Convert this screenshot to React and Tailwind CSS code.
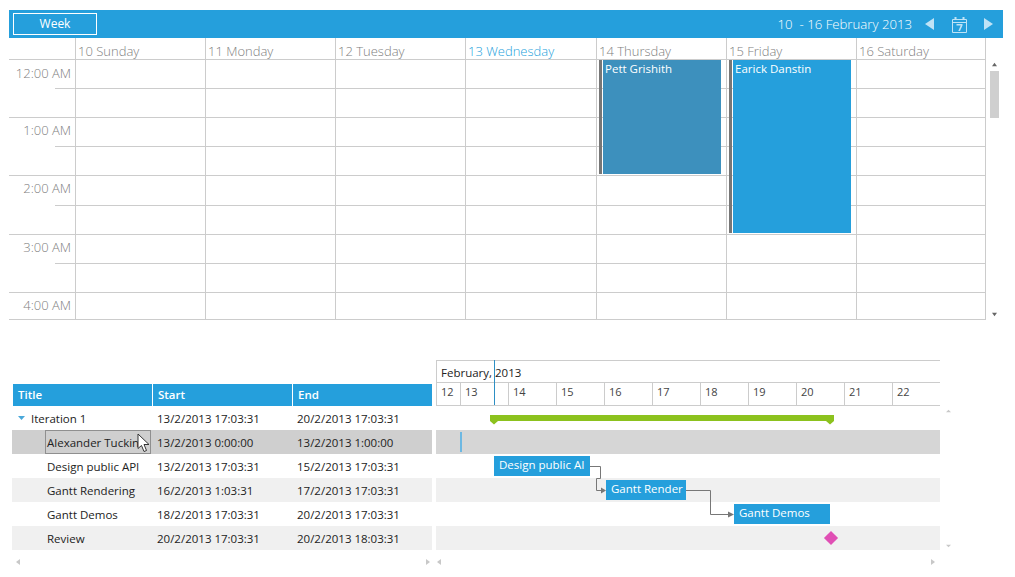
import { Fragment } from 'react';

const days = ['10 Sunday', '11 Monday', '12 Tuesday', '13 Wednesday', '14 Thursday', '15 Friday', '16 Saturday'];

// heights follow the picture, the grid is not perfectly even
const calRows = [
  { h: 28, time: '12:00 AM' },
  { h: 29 },
  { h: 29, time: '1:00 AM' },
  { h: 29 },
  { h: 30, time: '2:00 AM' },
  { h: 29 },
  { h: 29, time: '3:00 AM' },
  { h: 29 },
  { h: 27, time: '4:00 AM' },
];

const tasks = [
  { title: 'Iteration 1', start: '13/2/2013 17:03:31', end: '20/2/2013 17:03:31', group: true },
  { title: 'Alexander Tuckin', start: '13/2/2013 0:00:00', end: '13/2/2013 1:00:00', selected: true },
  { title: 'Design public API', start: '13/2/2013 17:03:31', end: '15/2/2013 17:03:31' },
  { title: 'Gantt Rendering', start: '16/2/2013 1:03:31', end: '17/2/2013 17:03:31', alt: true },
  { title: 'Gantt Demos', start: '18/2/2013 17:03:31', end: '20/2/2013 17:03:31' },
  { title: 'Review', start: '20/2/2013 17:03:31', end: '20/2/2013 18:03:31', alt: true },
];

const ganttDays = [13, 14, 15, 16, 17, 18, 19, 20, 21, 22];

function Arrow({ dir, className }) {
  return (
    <svg width="9" height="12" viewBox="0 0 9 12" className={className}>
      <path d={dir === 'left' ? 'M9 0V12L0 6Z' : 'M0 0V12L9 6Z'} fill="currentColor" />
    </svg>
  );
}

function CalendarIcon() {
  return (
    <svg width="15" height="17" viewBox="0 0 15 17" className="text-[#bfe3f6]">
      <path d="M.5 3.5H14.5V16.5H.5Z M.5 6.5H14.5" fill="none" stroke="currentColor" />
      <path d="M2.5 1H4.5V4H2.5Z M10.5 1H12.5V4H10.5Z M4.5 8H10.5V9.5L8 15H6.3L8.7 9.5H4.5Z" fill="currentColor" />
    </svg>
  );
}

function Tiny({ d, x = 8, y = 6 }) {
  return (
    <svg width={x} height={y} viewBox="0 0 8 6">
      <path d={d} fill="currentColor" />
    </svg>
  );
}

function Calendar() {
  return (
    <div className="ml-[9px] w-[994px] relative">
      <div className="h-[28px] bg-[#259fdc] flex items-center pl-[4px] pr-[10px] text-white">
        <div className="w-[84px] h-[22px] border border-white flex items-center justify-center text-[12px] font-normal">Week</div>
        <span className="ml-auto mt-[2px] text-[13.2px] font-light whitespace-pre">10  - 16 February 2013</span>
        <Arrow dir="left" className="ml-[13px] text-[#bfe3f6]" />
        <span className="ml-[18px]"><CalendarIcon /></span>
        <Arrow dir="right" className="ml-[17px] text-[#bfe3f6]" />
      </div>

      <div className="flex h-[22px] w-[977px]">
        <div className="w-[66px] border-b border-[#cccccc]" />
        {days.map((d, i) => (
          <div
            key={d}
            className={`border-l border-b border-[#cccccc] pl-[2px] text-[13px] font-light leading-[26px] overflow-hidden ${i === 3 ? 'w-[131px] text-[#259fdc]' : 'w-[130px] text-[#808080]'} ${i === 6 ? 'border-r' : ''}`}
          >
            {d}
          </div>
        ))}
      </div>

      <div className="relative w-[977px] border-b border-[#cccccc]">
        {calRows.map((r, idx) => (
          <div key={idx} className="flex" style={{ height: r.h }}>
            <div className="w-[66px] relative">
              {r.time ? (
                <div className={`h-full pr-[4px] text-right text-[13px] font-light leading-[20px] text-[#808080] ${idx === 0 ? 'pt-[3px]' : 'pt-[2px] border-t border-[#cccccc]'}`}>{r.time}</div>
              ) : (
                <div className="h-full ml-[46px] border-t border-[#cccccc]" />
              )}
            </div>
            {days.map((d, i) => (
              <div
                key={d}
                className={`border-l border-[#cccccc] ${idx === 0 ? '' : 'border-t'} ${i === 3 ? 'w-[131px]' : 'w-[130px]'} ${i === 6 ? 'border-r' : ''}`}
              />
            ))}
          </div>
        ))}

        <div className="absolute left-[590px] top-[0px] h-[114px] w-[122px] flex">
          <div className="w-[3px] bg-[#777777]" />
          <div className="ml-[1px] flex-1 bg-[#3d90bd] px-[2px] text-[11.5px] font-medium leading-[18px] text-white">Pett Grishith</div>
        </div>
        <div className="absolute left-[720px] top-[0px] h-[173px] w-[122px] flex">
          <div className="w-[3px] bg-[#777777]" />
          <div className="ml-[1px] flex-1 bg-[#259fdc] px-[2px] text-[11.5px] font-medium leading-[18px] text-white">Earick Danstin</div>
        </div>
      </div>

      <div className="absolute left-[981px] top-[52px] h-[255px] w-[9px] flex flex-col items-center text-[#666666]">
        <Tiny d="M4 1L7 5H1Z" x={7} y={5} />
        <div className="mt-[4px] h-[47px] w-[9px] bg-[#cfcfcf]" />
        <div className="mt-auto"><Tiny d="M1 1H7L4 5Z" x={7} y={5} /></div>
      </div>
    </div>
  );
}

function TaskTable() {
  return (
    <div className="w-[420px] pt-[24px]">
      <div className="ml-[1px] grid grid-cols-[139px_139px_139px] gap-x-[1px] h-[21px] mb-[1px]">
        {['Title', 'Start', 'End'].map((h) => (
          <div key={h} className="bg-[#259fdc] pl-[5px] text-[11.5px] font-semibold leading-[22px] text-white">{h}</div>
        ))}
      </div>
      {tasks.map((t) => (
        <div
          key={t.title}
          className={`flex h-[24px] items-center text-[11.5px] text-[#222222] ${t.selected ? 'bg-[#cfcfcf]' : t.alt ? 'bg-[#f0f0f0]' : ''}`}
        >
          <div className="w-[145px] shrink-0 h-full flex items-center">
            {t.group ? (
              <Fragment>
                <span className="ml-[6px] text-[#4aa8da]"><Tiny d="M0 1H7L3.5 5Z" /></span>
                <span className="ml-[5px] mt-[2px]">{t.title}</span>
              </Fragment>
            ) : t.selected ? (
              <div className="relative ml-[33px] h-full w-[106px] border border-[#8f8f8f] pl-[1px] leading-[24px] whitespace-nowrap overflow-hidden">
                {t.title}
              </div>
            ) : (
              <span className="ml-[35px] mt-[2px]">{t.title}</span>
            )}
          </div>
          <div className="w-[140px] shrink-0 mt-[2px]">{t.start}</div>
          <div className="mt-[2px]">{t.end}</div>
        </div>
      ))}
      <div className="mt-[9px] flex justify-between pl-[3px] pr-[1px] text-[#c8c8c8]">
        <Tiny d="M5 0V6L1 3Z" />
        <Tiny d="M3 0V6L7 3Z" />
      </div>
    </div>
  );
}

function GanttChart() {
  const rowBg = ['', 'bg-[#d6d6d6]', '', 'bg-[#f0f0f0]', '', 'bg-[#f0f0f0]'];
  const barText = 'bg-[#259fdc] pl-[5px] text-[11.5px] leading-[17px] text-white overflow-hidden whitespace-nowrap';
  return (
    <div className="ml-[4px] w-[504px] relative">
      <div className="h-[22px] border-t border-l border-[#cccccc] pl-[4px] text-[11.5px] leading-[23px] text-[#222222]">February, 2013</div>
      <div className="flex h-[24px] border-y border-[#cccccc] text-[11px] leading-[18px] text-[#444444]">
        <div className="w-[24px] border-l border-[#cccccc] pl-[4px]">12</div>
        {ganttDays.map((d) => (
          <div key={d} className="w-[48px] border-l border-[#cccccc] pl-[4px]">{d}</div>
        ))}
      </div>
      <div className="absolute left-[58px] top-0 h-[45px] w-px bg-[#2d8fc4]" />

      <div className="relative">
        {rowBg.map((bg, i) => (
          <div key={i} className={`h-[24px] ${bg}`} />
        ))}

        <div className="absolute left-[54px] top-[9px] h-[6px] w-[344px] bg-[#8cc21e]" />
        <svg className="absolute left-[54px] top-[15px]" width="344" height="4" viewBox="0 0 344 4">
          <path d="M0 0H8L4 3.5Z M336 0H344L340 3.5Z" fill="#8cc21e" />
        </svg>

        <div className="absolute left-[24px] top-[26px] h-[20px] w-[2px] bg-[#6db8e2]" />

        <div className={`absolute left-[58px] top-[50px] h-[20px] w-[96px] ${barText}`}>Design public AI</div>
        <div className={`absolute left-[170px] top-[74px] h-[20px] w-[80px] ${barText}`}>Gantt Render</div>
        <div className={`absolute left-[298px] top-[98px] h-[20px] w-[96px] ${barText}`}>Gantt Demos</div>
        <div className="absolute left-[390px] top-[127px] h-[10px] w-[10px] rotate-45 bg-[#e04fb4]" />

        <svg className="absolute left-[154px] top-[60px]" width="150" height="52" viewBox="0 0 150 52" fill="none">
          <path d="M0 .5H10.5V12.5H6.5V24.5H14" stroke="#777777" />
          <path d="M11 21.5L16 24.5L11 27.5Z" fill="#777777" />
          <path d="M96 24.5H120.5V48.5H140" stroke="#777777" />
          <path d="M138 45.5L144 48.5L138 51.5Z" fill="#777777" />
        </svg>
      </div>

      <div className="mt-[9px] flex justify-between pr-[4px] text-[#c8c8c8]">
        <Tiny d="M5 0V6L1 3Z" />
        <Tiny d="M3 0V6L7 3Z" />
      </div>

      <div className="absolute left-[509px] top-[49px] h-[140px] w-[7px] flex flex-col justify-between text-[#c8c8c8]">
        <Tiny d="M4 1L7 4H1Z" x={7} y={5} />
        <Tiny d="M1 1H7L4 4Z" x={7} y={5} />
      </div>
    </div>
  );
}

export default function App() {
  return (
    <div className="relative w-[1015px] h-[577px] overflow-hidden bg-white pt-[10px] font-['Open_Sans',sans-serif]">
      <Calendar />
      <div className="mt-[40px] ml-[12px] flex">
        <TaskTable />
        <GanttChart />
      </div>
      <svg className="absolute left-[137px] top-[433px]" width="14" height="20" viewBox="0 0 14 20">
        <path d="M1 1V15.5L4.5 12.5L7 18.5L9.5 17.5L7 11.5H12Z" fill="#ffffff" stroke="#333333" />
      </svg>
    </div>
  );
}
